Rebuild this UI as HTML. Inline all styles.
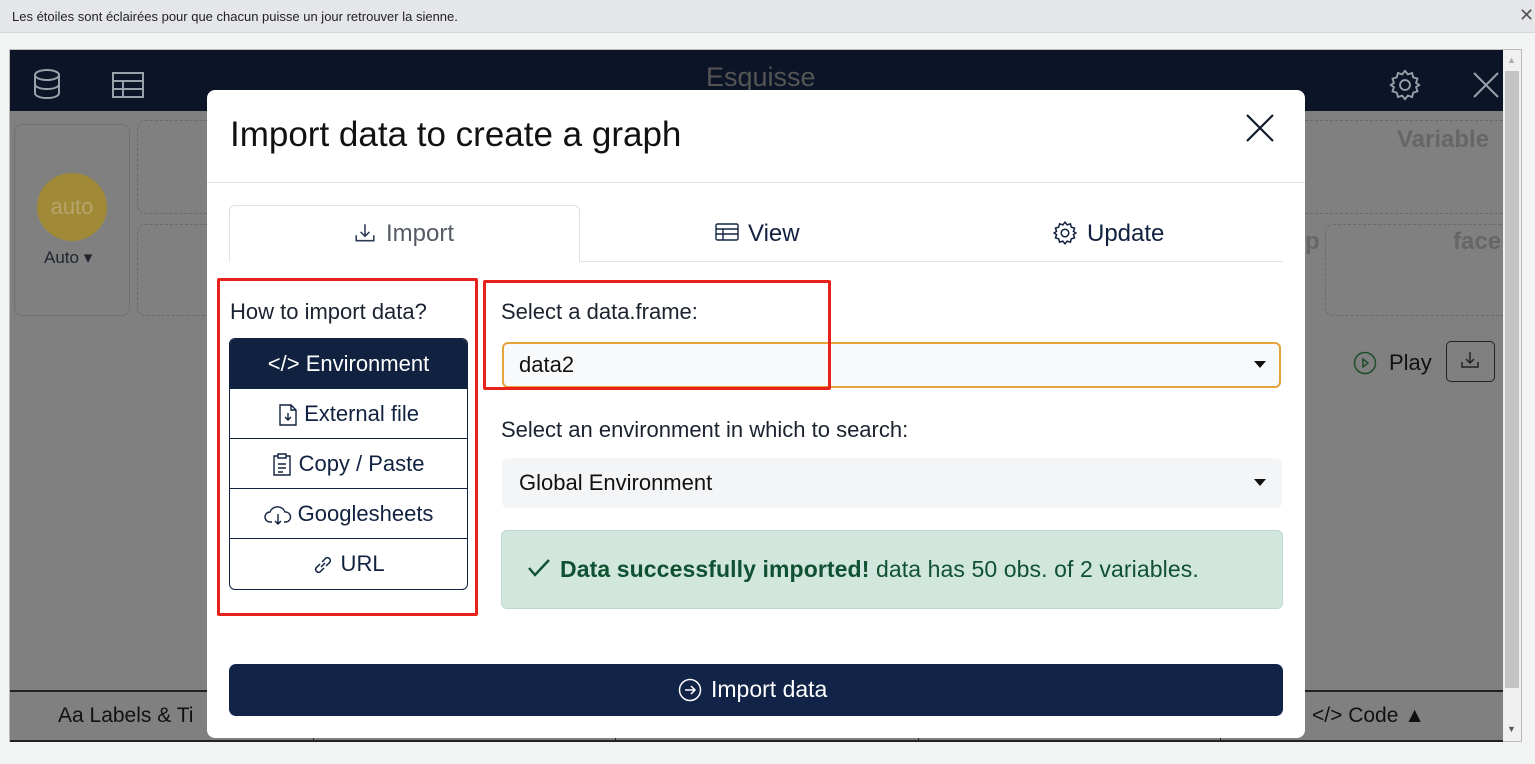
<!DOCTYPE html>
<html><head><meta charset="utf-8"><style>
*{box-sizing:border-box;margin:0;padding:0}
body{width:1535px;height:764px;overflow:hidden;background:#f2f3f3;font-family:"Liberation Sans",sans-serif;color:#112240;position:relative}
.a{position:absolute}
.t{white-space:nowrap}
svg{display:inline-block;vertical-align:middle}
</style></head><body>
<div class="a" style="left:0;top:0;width:1535px;height:33px;background:#e4e6e9;border-bottom:1px solid #d6d8da"></div>
<div class="a t" style="left:12px;top:9px;font-size:13px;color:#222">Les étoiles sont éclairées pour que chacun puisse un jour retrouver la sienne.</div>
<div class="a" style="left:1519px;top:5px;font-size:18px;color:#555">✕</div>

<div class="a" style="left:9px;top:49px;width:1513px;height:693px;border:1px solid #bbb;background:#808080"></div>
<div class="a" style="left:10px;top:50px;width:1493px;height:61px;background:#0c1427"></div>
<div class="a" style="left:1503px;top:50px;width:18px;height:691px;background:#f0f0f0"></div>
<div class="a" style="left:1505px;top:71px;width:14px;height:617px;background:#c4c4c4"></div>
<div class="a" style="left:1507px;top:55px;font-size:9px;color:#aaa">▲</div>
<div class="a" style="left:1507px;top:724px;font-size:9px;color:#555">▼</div>
<svg class="a" style="left:32px;top:68px" width="30" height="32" viewBox="0 0 30 32" fill="none" stroke="#9aa0aa" stroke-width="2"><ellipse cx="15" cy="7" rx="12" ry="5"/><path d="M3 7v18c0 3 5 5 12 5s12-2 12-5V7M3 16c0 3 5 5 12 5s12-2 12-5"/></svg>
<svg class="a" style="left:112px;top:72px" width="32" height="26" viewBox="0 0 32 26" fill="none" stroke="#9aa0aa" stroke-width="2"><rect x="1" y="1" width="30" height="24"/><path d="M1 9h30M1 17h30M11 9v16"/></svg>
<div class="a t" style="left:706px;top:62px;font-size:27px;color:#555">Esquisse</div>
<svg class="a" style="left:1388px;top:68px" width="34" height="34" viewBox="0 0 24 24" fill="none" stroke="#9aa0aa" stroke-width="1.3"><circle cx="12" cy="12" r="3.5"/><path d="M12 2l2 2.5 3-1 .8 3.1 3 .9-1 3L22 12l-2.2 1.5 1 3-3 .9-.8 3.1-3-1L12 22l-2-2.5-3 1-.8-3.1-3-.9 1-3L2 12l2.2-1.5-1-3 3-.9.8-3.1 3 1z"/></svg>
<svg class="a" style="left:1473px;top:72px" width="26" height="26" viewBox="0 0 26 26" stroke="#9aa0aa" stroke-width="2"><path d="M1 1l24 24M25 1L1 25"/></svg>
<div class="a" style="left:14px;top:124px;width:116px;height:192px;border:1px solid #6f6f6f;border-radius:8px"></div>
<div class="a" style="left:37px;top:173px;width:70px;height:68px;border-radius:50%;background:#a08a38;color:#b5a56a;font-size:22px;text-align:center;line-height:68px">auto</div>
<div class="a t" style="left:44px;top:248px;font-size:17px;color:#1f2630">Auto ▾</div>
<div class="a" style="left:137px;top:120px;width:80px;height:94px;border:1px dashed #6a6a6a;border-radius:8px"></div>
<div class="a" style="left:137px;top:224px;width:80px;height:92px;border:1px dashed #6a6a6a;border-radius:8px"></div>
<div class="a" style="left:1290px;top:120px;width:213px;height:94px;border:1px dashed #6a6a6a;border-right:none"></div>
<div class="a t" style="left:1397px;top:126px;font-size:24px;font-weight:bold;color:#666">Variable</div>
<div class="a" style="left:1325px;top:224px;width:178px;height:92px;border:1px dashed #6a6a6a;border-right:none;border-radius:8px 0 0 8px"></div>
<div class="a t" style="left:1453px;top:228px;font-size:24px;font-weight:bold;color:#666">face</div>
<div class="a t" style="left:1305px;top:228px;font-size:24px;font-weight:bold;color:#666">p</div>
<svg class="a" style="left:1353px;top:351px" width="24" height="24" viewBox="0 0 24 24" fill="none" stroke="#1e4d2b" stroke-width="1.5"><circle cx="12" cy="12" r="10.5"/><path d="M10 8l5 4-5 4z"/></svg>
<div class="a t" style="left:1389px;top:350px;font-size:22px;color:#111">Play</div>
<div class="a" style="left:1446px;top:341px;width:49px;height:41px;border:1px solid #222;border-radius:5px"></div>
<svg class="a" style="left:1460px;top:350px" width="20" height="20" viewBox="0 0 20 20" fill="none" stroke="#222" stroke-width="1.5"><path d="M10 2v11M6 9l4 4 4-4M2 12v5h16v-5"/></svg>
<div class="a" style="left:10px;top:690px;width:1493px;height:52px;border-top:2px solid #222;border-bottom:2px solid #222"></div>
<div class="a" style="left:313px;top:692px;width:1px;height:48px;background:#222"></div>
<div class="a" style="left:615px;top:692px;width:1px;height:48px;background:#222"></div>
<div class="a" style="left:918px;top:692px;width:1px;height:48px;background:#222"></div>
<div class="a" style="left:1220px;top:692px;width:1px;height:48px;background:#222"></div>
<div class="a t" style="left:58px;top:704px;font-size:21px;color:#111">Aa Labels &amp; Ti</div>
<div class="a t" style="left:1312px;top:704px;font-size:21px;color:#111">&lt;/&gt; Code ▲</div>

<div class="a" style="left:207px;top:90px;width:1098px;height:648px;background:#fff;border-radius:8px"></div>
<div class="a t" style="left:230px;top:115px;font-size:35px;color:#111">Import data to create a graph</div>
<svg class="a" style="left:1246px;top:114px" width="28" height="28" viewBox="0 0 28 28" stroke="#111a2e" stroke-width="2.2"><path d="M1 1l26 26M27 1L1 27"/></svg>
<div class="a" style="left:207px;top:182px;width:1098px;height:1px;background:#dee2e6"></div>

<div class="a" style="left:229px;top:261px;width:1054px;height:1px;background:#dee2e6"></div>
<div class="a" style="left:229px;top:205px;width:351px;height:57px;border:1px solid #dee2e6;border-bottom:1px solid #fff;border-radius:6px 6px 0 0;background:#fff"></div>
<svg class="a" style="left:354px;top:222px" width="22" height="22" viewBox="0 0 20 20" fill="none" stroke="#2b3a55" stroke-width="1.4"><path d="M10 2v11M6 9l4 4 4-4M2 12v5h16v-5"/></svg>
<div class="a t" style="left:386px;top:220px;font-size:24px;color:#555b66">Import</div>
<svg class="a" style="left:715px;top:222px" width="24" height="20" viewBox="0 0 24 20" fill="none" stroke="#112240" stroke-width="1.4"><rect x="1" y="2" width="22" height="16" rx="1.5"/><path d="M1 7h22M1 12h22M8 7v11"/></svg>
<div class="a t" style="left:748px;top:220px;font-size:24px">View</div>
<svg class="a" style="left:1052px;top:220px" width="26" height="26" viewBox="0 0 24 24" fill="none" stroke="#112240" stroke-width="1.4"><circle cx="12" cy="12" r="3.5"/><path d="M12 2l2 2.5 3-1 .8 3.1 3 .9-1 3L22 12l-2.2 1.5 1 3-3 .9-.8 3.1-3-1L12 22l-2-2.5-3 1-.8-3.1-3-.9 1-3L2 12l2.2-1.5-1-3 3-.9.8-3.1 3 1z"/></svg>
<div class="a t" style="left:1087px;top:220px;font-size:24px">Update</div>

<div class="a t" style="left:230px;top:299px;font-size:22px;color:#1b2230">How to import data?</div>
<div class="a" style="left:229px;top:338px;width:239px;height:252px;border:1px solid #112240;border-radius:6px;overflow:hidden">
 <div style="height:50px;background:#112240;color:#fff;font-size:22px;text-align:center;line-height:50px">&lt;/&gt; Environment</div>
 <div style="height:50px;border-bottom:1px solid #112240;font-size:22px;text-align:center;line-height:50px"><svg width="20" height="24" viewBox="0 0 20 24" fill="none" stroke="#112240" stroke-width="1.4"><path d="M2 2h11l5 5v15H2zM13 2v5h5M10 10v7M7 14l3 3 3-3"/></svg> External file</div>
 <div style="height:50px;border-bottom:1px solid #112240;font-size:22px;text-align:center;line-height:50px"><svg width="20" height="24" viewBox="0 0 20 24" fill="none" stroke="#112240" stroke-width="1.4"><path d="M6 3H2v19h16V3h-4M6 1h8v4H6zM6 11h8M6 15h8M6 19h5"/></svg> Copy / Paste</div>
 <div style="height:50px;border-bottom:1px solid #112240;font-size:22px;text-align:center;line-height:50px"><svg width="28" height="22" viewBox="0 0 28 22" fill="none" stroke="#112240" stroke-width="1.4"><path d="M8 18H6a5 5 0 010-10 8 8 0 0115 0 5 5 0 011 10h-2M14 10v10M11 17l3 3 3-3"/></svg> Googlesheets</div>
 <div style="height:50px;font-size:22px;text-align:center;line-height:50px"><svg width="22" height="22" viewBox="0 0 22 22" fill="none" stroke="#112240" stroke-width="1.5"><path d="M9 13l4-4M8 10l-4 4a3 3 0 004 4l4-4M14 12l4-4a3 3 0 00-4-4l-4 4"/></svg> URL</div>
</div>
<div class="a" style="left:217px;top:278px;width:261px;height:338px;border:3px solid #e8221b;border-radius:2px"></div>

<div class="a t" style="left:501px;top:299px;font-size:22px;color:#1b2230">Select a data.frame:</div>
<div class="a" style="left:502px;top:342px;width:779px;height:46px;border:2px solid #e5a33a;border-radius:6px;background:#f8f9fa"></div>
<div class="a t" style="left:519px;top:352px;font-size:22px;color:#111">data2</div>
<div class="a" style="left:1254px;top:361px;width:0;height:0;border-left:6px solid transparent;border-right:6px solid transparent;border-top:7px solid #111"></div>
<div class="a" style="left:483px;top:280px;width:348px;height:110px;border:3px solid #e8221b;border-radius:2px"></div>
<div class="a t" style="left:501px;top:417px;font-size:22px;color:#1b2230">Select an environment in which to search:</div>
<div class="a" style="left:502px;top:458px;width:780px;height:50px;border-radius:6px;background:#f4f5f7"></div>
<div class="a t" style="left:519px;top:470px;font-size:22px;color:#111">Global Environment</div>
<div class="a" style="left:1254px;top:479px;width:0;height:0;border-left:6px solid transparent;border-right:6px solid transparent;border-top:7px solid #111"></div>
<div class="a" style="left:501px;top:530px;width:782px;height:79px;background:#d1e7dd;border:1px solid #badbcc;border-radius:6px"></div>
<svg class="a" style="left:527px;top:558px" width="24" height="20" viewBox="0 0 24 20" fill="none" stroke="#0f5132" stroke-width="2.4"><path d="M2 10l6 7L22 2"/></svg>
<div class="a t" style="left:560px;top:556px;font-size:23px;color:#0f5132;letter-spacing:0.1px"><b>Data successfully imported!</b> data has 50 obs. of 2 variables.</div>

<div class="a" style="left:229px;top:664px;width:1054px;height:52px;background:#112347;border-radius:7px"></div>
<svg class="a" style="left:678px;top:678px" width="24" height="24" viewBox="0 0 24 24" fill="none" stroke="#fff" stroke-width="1.5"><circle cx="12" cy="12" r="10.5"/><path d="M7 12h10M13 8l4 4-4 4"/></svg>
<div class="a t" style="left:711px;top:676px;font-size:23px;color:#fff">Import data</div>
</body></html>
